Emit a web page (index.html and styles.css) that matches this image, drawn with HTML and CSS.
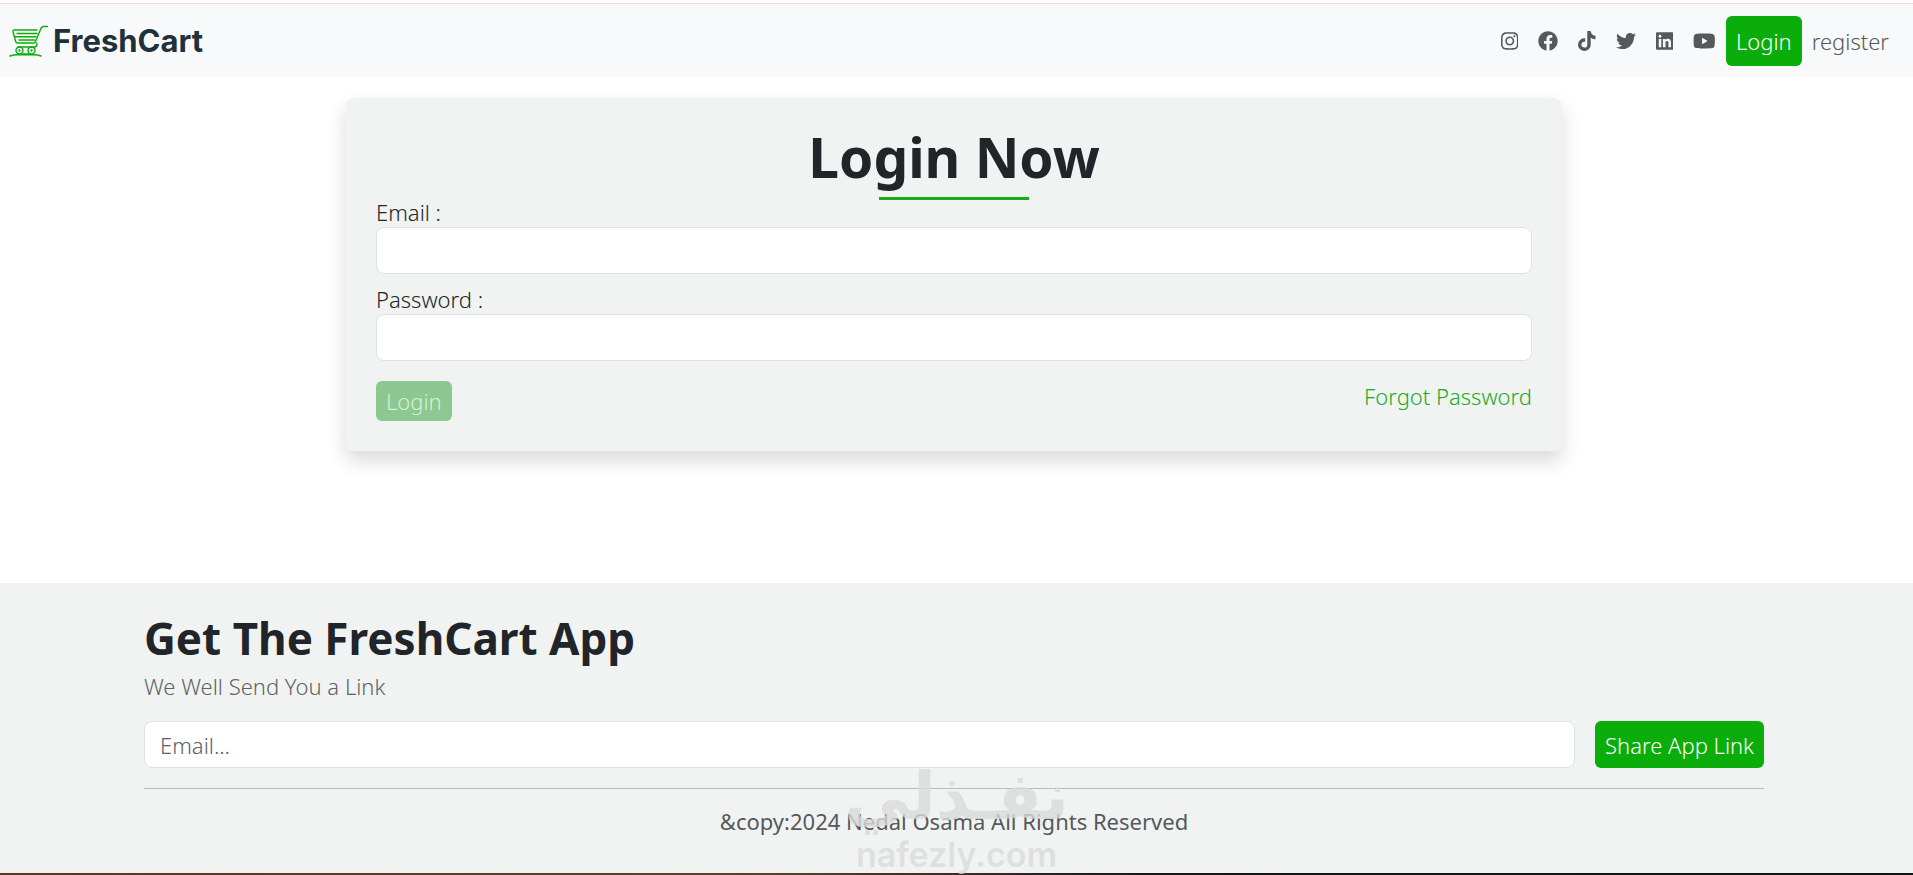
FILE: index.html
```html
<!DOCTYPE html>
<html lang="en">
<head>
<meta charset="utf-8">
<meta name="viewport" content="width=device-width, initial-scale=1">
<title>FreshCart</title>
<link rel="stylesheet" href="styles.css">
</head>
<body>
<header class="navbar">
  <a class="brand" href="#">
    <svg class="brand-icon" viewBox="0 0 40 32" fill="none" stroke="#0aad0a" stroke-width="1.4" stroke-linecap="round" stroke-linejoin="round" aria-hidden="true">
      <path d="M38.500 1.500H35Q32.500 1.500 31.700 4L26.500 16.500Q26 18 24.500 18H8.500Q7 18 6.500 16L4 6.500Q3.700 5 5.200 5H28"/>
      <path d="M8 8.500H28M6 11.700H27M10 15H25.500"/>
      <path d="M9 22H25M14 29H19.500M27.500 18Q29 21 26 22"/>
      <circle cx="10.500" cy="25.500" r="3.500"/><circle cx="22.500" cy="25.500" r="3.500"/>
      <circle cx="10.500" cy="25.500" r=".5"/><circle cx="22.500" cy="25.500" r=".5"/>
      <path d="M1 31Q4 29.700 9 29.700H24Q29 29.700 32 31"/>
    </svg>
    <span>FreshCart</span>
  </a>
  <nav class="links">
    <a class="social" href="#" aria-label="Instagram"><svg viewBox="0 0 448 512"><path d="M224.100 141c-63.600 0-114.900 51.300-114.900 114.900s51.300 114.900 114.900 114.900S339 319.500 339 255.900 287.700 141 224.100 141zm0 189.600c-41.100 0-74.700-33.500-74.700-74.700s33.500-74.700 74.700-74.700 74.700 33.500 74.700 74.700-33.600 74.700-74.700 74.700zm146.400-194.300c0 14.900-12 26.800-26.800 26.800-14.900 0-26.800-12-26.800-26.800s12-26.800 26.800-26.800 26.800 12 26.800 26.800zm76.100 27.200c-1.700-35.900-9.900-67.700-36.200-93.900-26.200-26.200-58-34.400-93.900-36.200-37-2.100-147.900-2.100-184.900 0-35.800 1.700-67.600 9.900-93.900 36.100s-34.400 58-36.200 93.900c-2.100 37-2.100 147.900 0 184.900 1.700 35.900 9.900 67.700 36.200 93.900s58 34.400 93.900 36.200c37 2.100 147.900 2.100 184.900 0 35.900-1.700 67.700-9.900 93.900-36.200 26.200-26.200 34.400-58 36.200-93.900 2.100-37 2.100-147.800 0-184.800zM398.800 388c-7.800 19.600-22.900 34.700-42.600 42.600-29.500 11.700-99.500 9-132.100 9s-102.700 2.600-132.100-9c-19.600-7.800-34.700-22.900-42.600-42.600-11.700-29.500-9-99.500-9-132.100s-2.600-102.700 9-132.100c7.800-19.600 22.900-34.700 42.600-42.600 29.500-11.700 99.500-9 132.100-9s102.700-2.600 132.100 9c19.600 7.800 34.700 22.900 42.600 42.600 11.700 29.500 9 99.500 9 132.100s2.700 102.700-9 132.100z"/></svg></a>
    <a class="social" href="#" aria-label="Facebook"><svg viewBox="0 0 512 512"><path d="M504 256C504 119 393 8 256 8S8 119 8 256c0 123.780 90.690 226.380 209.250 245V327.690h-63V256h63v-54.640c0-62.150 37-96.480 93.670-96.480 27.140 0 55.520 4.840 55.520 4.840v61h-31.280c-30.800 0-40.410 19.120-40.410 38.730V256h68.780l-11 71.690h-57.780V501C413.310 482.380 504 379.780 504 256z"/></svg></a>
    <a class="social" href="#" aria-label="TikTok"><svg viewBox="0 0 448 512"><path d="M448 209.910a210.060 210.060 0 0 1-122.770-39.250v178.720A162.550 162.550 0 1 1 185 188.310v89.890a74.620 74.620 0 1 0 52.230 71.180V0h88a121.180 121.180 0 0 0 1.860 22.170A122.180 122.180 0 0 0 381 102.390a121.430 121.430 0 0 0 67 20.140z"/></svg></a>
    <a class="social" href="#" aria-label="Twitter"><svg viewBox="0 0 512 512"><path d="M459.370 151.716c.325 4.548.325 9.097.325 13.645 0 138.720-105.583 298.558-298.558 298.558-59.452 0-114.680-17.219-161.137-47.106 8.447.974 16.568 1.299 25.340 1.299 49.055 0 94.213-16.568 130.274-44.832-46.132-.975-84.792-31.188-98.112-72.772 6.498.974 12.995 1.624 19.818 1.624 9.421 0 18.843-1.300 27.614-3.573-48.081-9.747-84.143-51.980-84.143-102.985v-1.299c13.969 7.797 30.214 12.670 47.431 13.319-28.264-18.843-46.781-51.005-46.781-87.391 0-19.492 5.197-37.360 14.294-52.954 51.655 63.675 129.300 105.258 216.365 109.807-1.624-7.797-2.599-15.918-2.599-24.040 0-57.828 46.782-104.934 104.934-104.934 30.213 0 57.502 12.670 76.670 33.137 23.715-4.548 46.456-13.320 66.599-25.340-7.798 24.366-24.366 44.833-46.132 57.827 21.117-2.273 41.584-8.122 60.426-16.243-14.292 20.791-32.161 39.308-52.628 54.253z"/></svg></a>
    <a class="social" href="#" aria-label="LinkedIn"><svg viewBox="0 0 448 512"><path d="M416 32H31.900C14.300 32 0 46.500 0 64.300v383.400C0 465.500 14.300 480 31.900 480H416c17.600 0 32-14.500 32-32.300V64.300c0-17.800-14.400-32.300-32-32.300zM135.400 416H69V202.200h66.500V416zm-33.200-243c-21.300 0-38.500-17.300-38.500-38.500S80.900 96 102.200 96c21.200 0 38.500 17.300 38.500 38.500 0 21.300-17.200 38.500-38.500 38.500zm282.100 243h-66.400V312c0-24.800-.5-56.700-34.500-56.700-34.600 0-39.900 27-39.900 54.900V416h-66.400V202.200h63.700v29.200h.9c8.900-16.800 30.600-34.500 62.900-34.500 67.200 0 79.700 44.300 79.700 101.900V416z"/></svg></a>
    <a class="social" href="#" aria-label="YouTube"><svg viewBox="0 0 576 512"><path d="M549.655 124.083c-6.281-23.650-24.787-42.276-48.284-48.597C458.781 64 288 64 288 64S117.220 64 74.629 75.486c-23.497 6.322-42.003 24.947-48.284 48.597-11.412 42.867-11.412 132.305-11.412 132.305s0 89.438 11.412 132.305c6.281 23.650 24.787 41.500 48.284 47.821C117.220 448 288 448 288 448s170.780 0 213.371-11.486c23.497-6.321 42.003-24.171 48.284-47.821 11.412-42.867 11.412-132.305 11.412-132.305s0-89.438-11.412-132.305zm-317.510 213.508V175.185l142.739 81.205-142.739 81.201z"/></svg></a>
    <a class="nav-login" href="#">Login</a>
    <a class="nav-register" href="#">register</a>
  </nav>
</header>

<main class="page">
  <form class="card">
    <h1 class="card-title">Login Now</h1>
    <div class="field">
      <label for="email">Email :</label>
      <input class="control" id="email" type="email">
    </div>
    <div class="field">
      <label for="password">Password :</label>
      <input class="control" id="password" type="password">
    </div>
    <div class="actions">
      <button class="submit" type="submit" disabled>Login</button>
      <a class="forgot" href="#">Forgot Password</a>
    </div>
  </form>
</main>

<footer class="footer">
  <div class="footer-inner">
    <h2 class="footer-title">Get The FreshCart App</h2>
    <p class="footer-note">We Well Send You a Link</p>
    <form class="share">
      <input class="control" type="email" placeholder="Email..." aria-label="Email">
      <button class="share-button" type="button">Share App Link</button>
    </form>
    <p class="copyright">&amp;copy:2024 Nedal Osama All Rights Reserved</p>
  </div>
  <div class="watermark">
    <span class="watermark-ar" lang="ar" dir="rtl">نفـذلي</span>
    <span class="watermark-en">nafezly.com</span>
  </div>
</footer>
</body>
</html>
```
FILE: styles.css
```css
* {
  box-sizing: border-box;
}

body {
  display: flex;
  flex-direction: column;
  min-height: 100vh;
  margin: 0;
  background: #fff;
  color: #212529;
  font-family: "Noto Sans", "Open Sans", sans-serif;
  font-size: 22px;
  font-weight: 340;
  line-height: 30px;
}

a {
  color: inherit;
  text-decoration: none;
}

h1,
h2,
p {
  margin: 0;
}

input,
button {
  font: inherit;
}

.navbar {
  display: flex;
  align-items: center;
  justify-content: space-between;
  padding: 12px 24px 11px 9px;
  border-top: 1px solid #f3d3da;
  margin-top: 3px;
  background: #f8f9fb;
}

.brand {
  display: flex;
  align-items: center;
  gap: 4px;
  color: #21313c;
  font-family: Inter, sans-serif;
  font-size: 31px;
  font-weight: 650;
}

.brand-icon {
  width: 40px;
  height: 32px;
}

.links {
  display: flex;
  align-items: center;
  color: #565859;
}

.social {
  display: flex;
  margin-right: 20px;
}

.social svg {
  height: 20px;
  fill: currentColor;
}

.social:nth-child(6) {
  margin-right: 10px;
}

.nav-login {
  padding: 10px;
  border-radius: 6px;
  margin-right: 10px;
  background: #0aad0a;
  color: #fff;
}

.page {
  flex: 1;
  padding: 21px 5px 0 0;
}

.card {
  display: flex;
  flex-direction: column;
  max-width: 1216px;
  padding: 30px;
  border-radius: 8px;
  margin: 0 auto;
  background: #f0f3f2;
  box-shadow: 0 10px 20px rgba(0, 0, 0, 0.15);
}

.card-title {
  align-self: center;
  margin-bottom: -3px;
  font-size: 55px;
  font-weight: 700;
  line-height: 58px;
}

.card-title::after {
  content: "";
  display: block;
  width: 150px;
  height: 3px;
  margin: 11px auto 0;
  background: #1aab1f;
}

.field {
  display: flex;
  flex-direction: column;
  margin-bottom: 10px;
}

.control {
  width: 100%;
  height: 47px;
  padding: 0 15px;
  border: 1px solid #dee2e6;
  border-radius: 8px;
  background: #fff;
  color: #212529;
}

.control::placeholder {
  color: #5d6063;
  opacity: 1;
}

.actions {
  display: flex;
  align-items: flex-start;
  justify-content: space-between;
  padding-top: 10px;
}

.submit {
  padding: 5px 10px;
  border: 0;
  border-radius: 6px;
  background: #8cc88f;
  color: #d5f0d5;
}

.forgot {
  color: #1aab1f;
}

.footer {
  position: relative;
  padding: 30px 5px 36px 0;
  border-bottom: 2px solid;
  border-image: linear-gradient(90deg, #5b3328, #5a4030 40%, #17171c 60%, #101512) 1;
  background: #f0f3f2;
}

.footer-inner {
  max-width: 1620px;
  margin: 0 auto;
}

.footer-title {
  font-size: 44px;
  font-weight: 700;
  line-height: 50px;
}

.footer-note {
  margin: 8px 0 20px;
  color: #5d6466;
}

.share {
  display: flex;
  gap: 20px;
  padding-bottom: 20px;
  border-bottom: 1px solid #b9bcbb;
}

.share-button {
  flex: none;
  padding: 0 10px;
  border: 0;
  border-radius: 6px;
  background: #0aad0a;
  color: #fff;
}

.copyright {
  padding-top: 17px;
  padding-bottom: 1px;
  color: #55595c;
  font-weight: 400;
  text-align: center;
}

.watermark {
  position: absolute;
  right: 0;
  bottom: 0;
  left: 0;
  display: flex;
  flex-direction: column;
  align-items: center;
  color: rgba(217, 219, 219, 0.8);
  font-family: "DejaVu Sans", sans-serif;
  font-weight: 700;
  pointer-events: none;
}

.watermark-ar {
  font-size: 66px;
  line-height: 80px;
}

.watermark-en {
  font-family: Inter, sans-serif;
  font-size: 34px;
  font-weight: 600;
  line-height: 36px;
}
```
